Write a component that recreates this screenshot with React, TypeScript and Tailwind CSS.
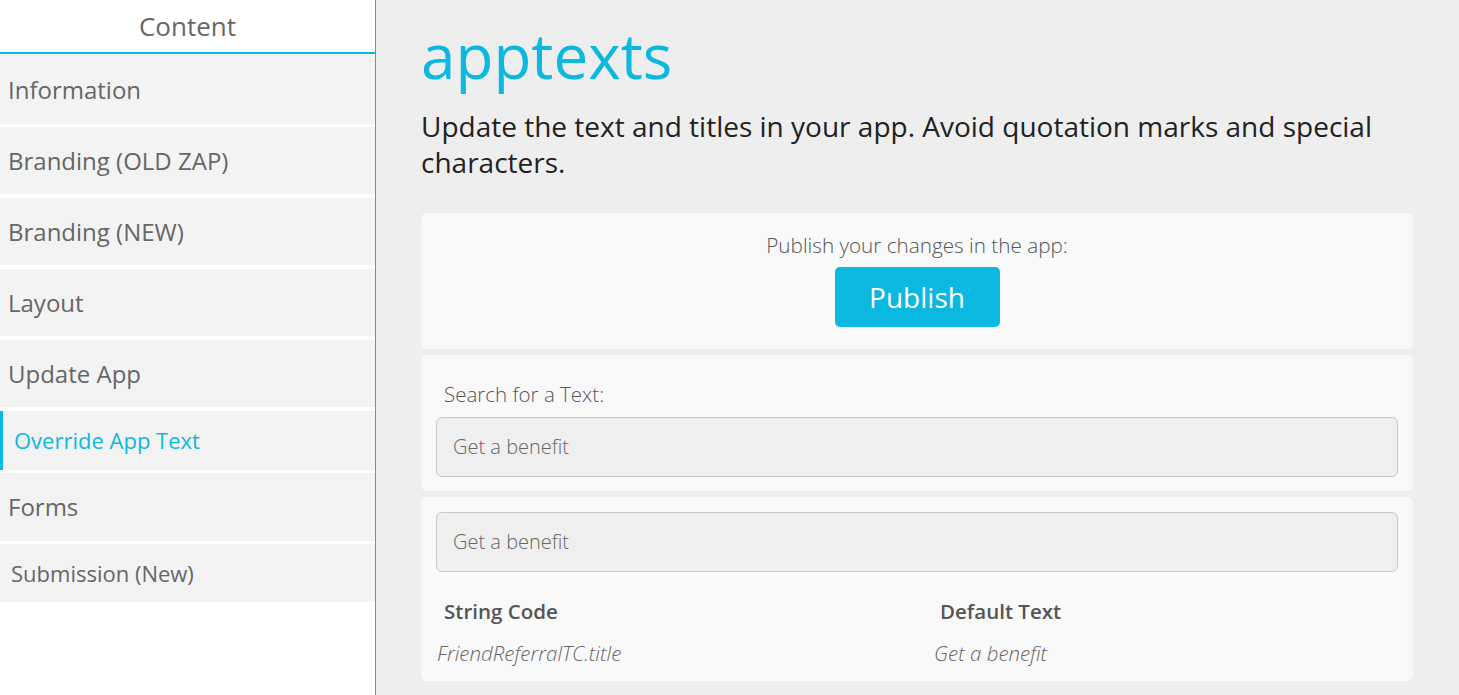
const font = "font-['Open_Sans','Noto_Sans',sans-serif]";

type NavItem = { label: string; h: string; gap: string; active?: boolean; pad?: string };

const nav: NavItem[] = [
  { label: "Information", h: "h-[69px]", gap: "mt-[1px]" },
  { label: "Branding (OLD ZAP)", h: "h-[67px]", gap: "mt-[3px]" },
  { label: "Branding (NEW)", h: "h-[67px]", gap: "mt-[4px]" },
  { label: "Layout", h: "h-[67px]", gap: "mt-[4px]" },
  { label: "Update App", h: "h-[67px]", gap: "mt-[4px]" },
  { label: "Override App Text", h: "h-[59px]", gap: "mt-[4px]", active: true },
  { label: "Forms", h: "h-[68px]", gap: "mt-[3px]" },
  { label: "Submission (New)", h: "h-[58px]", gap: "mt-[3px]", pad: "pl-[11px] text-[22px]" },
];

function Sidebar() {
  return (
    <aside className="w-[376px] shrink-0 border-r border-[#0bb8e0] bg-white">
      <div className="flex h-[54px] items-center justify-center border-b-2 border-[#0bb8e0] text-[26px] text-[#666]">
        Content
      </div>
      {nav.map((item) => (
        <div
          key={item.label}
          className={
            item.active
              ? `${item.h} ${item.gap} flex items-center border-l-[3px] border-[#0bb8e0] bg-[#f3f3f3] pl-[11px] text-[22px] text-[#0bb8e0]`
              : `${item.h} ${item.gap} flex items-center bg-[#f3f3f3] ${item.pad ?? "pl-2 text-[24px]"} text-[#666]`
          }
        >
          {item.label}
        </div>
      ))}
    </aside>
  );
}

function Field({ value }: { value: string }) {
  return (
    <div className="flex h-[60px] items-center rounded-md border border-[#c8c8c8] bg-[#efefef] px-4 text-[20px] font-light text-[#666]">
      {value}
    </div>
  );
}

export default function App() {
  return (
    <div className={`flex h-[695px] w-full overflow-hidden bg-[#eeeeee] ${font}`}>
      <Sidebar />
      <main className="flex-1 pl-[45px] pr-[46px]">
        <h1 className="mt-[16px] text-[62px] leading-[78px] text-[#0bb8e0]">apptexts</h1>
        <p className="mt-[14px] text-[28px] leading-[36px] text-[#222]">
          Update the text and titles in your app. Avoid quotation marks and special characters.
        </p>

        <section className="mt-[33px] flex h-[136px] flex-col items-center rounded-md bg-[#f9f9f9] pt-[17px]">
          <p className="text-[20.7px] font-light text-[#555]">Publish your changes in the app:</p>
          <button className="mt-[6px] h-[60px] w-[165px] rounded-[5px] bg-[#0bb8e0] text-[28px] text-white">
            Publish
          </button>
        </section>

        <section className="mt-[6px] h-[136px] rounded-md bg-[#f9f9f9] px-[15px] pt-[25px]">
          <p className="pl-[8px] text-[20.5px] font-light leading-[28px] text-[#555]">Search for a Text:</p>
          <div className="mt-[9px]">
            <Field value="Get a benefit" />
          </div>
        </section>

        <section className="mt-[6px] h-[184px] rounded-md bg-[#f9f9f9] px-[15px] pt-[15px]">
          <Field value="Get a benefit" />
          <div className="mt-[24px] grid grid-cols-2 text-[20.5px] font-semibold text-[#555]">
            <span className="pl-[8px]">String Code</span>
            <span className="pl-[23px]">Default Text</span>
          </div>
          <div className="mt-[11px] grid grid-cols-2 text-[20.5px] font-light italic text-[#666]">
            <span className="pl-[1px]">FriendReferralTC.title</span>
            <span className="pl-[17px]">Get a benefit</span>
          </div>
        </section>
      </main>
    </div>
  );
}
